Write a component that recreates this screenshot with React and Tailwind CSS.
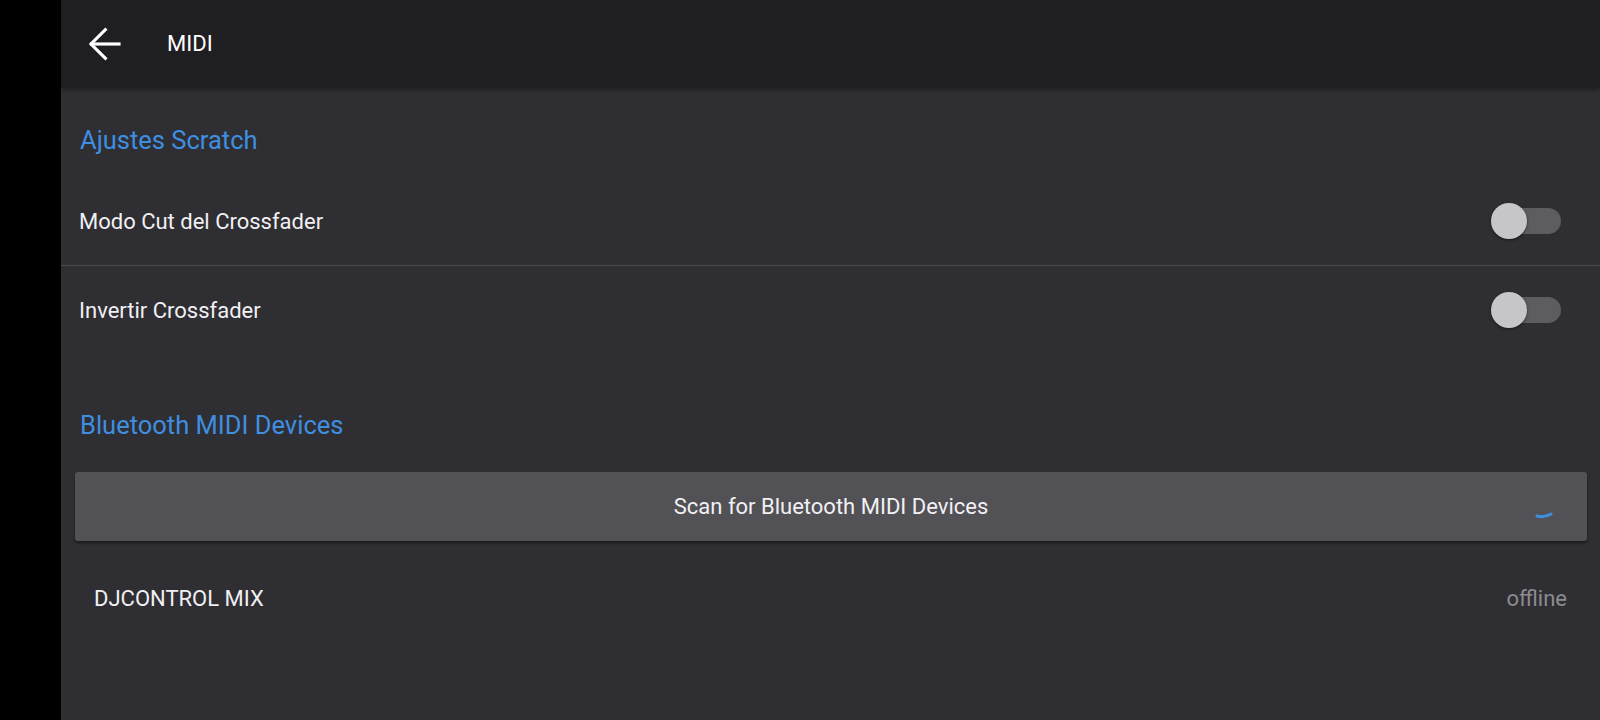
import React from "react";

function Toggle() {
  return (
    <div className="relative w-[70px] h-[36px] flex items-center">
      <div className="absolute left-[18px] right-0 h-[26px] rounded-full bg-[#5d5c60]" />
      <div className="absolute left-0 w-[36px] h-[36px] rounded-full bg-[#c6c5c9] shadow-[0_1px_3px_rgba(0,0,0,0.5)]" />
    </div>
  );
}

export default function App() {
  return (
    <div
      className="w-[1600px] h-[720px] flex bg-black overflow-hidden"
      style={{ fontFamily: "Roboto, 'Noto Sans', sans-serif" }}
    >
      <div className="w-[61px] shrink-0 bg-black" />
      <div className="flex-1 flex flex-col bg-[#2f2e32]">
        <div className="h-[88px] shrink-0 bg-[#1f1e22] flex items-center shadow-[0_2px_4px_rgba(0,0,0,0.35)] relative z-10">
          <div className="w-[88px] flex justify-center">
            <svg width="40" height="40" viewBox="0 0 24 24" fill="none" stroke="#ffffff" strokeWidth="1.9" strokeLinecap="square" strokeLinejoin="miter">
              <path d="M20.4 12H4" />
              <path d="M12.2 3.4L3.6 12l8.6 8.6" />
            </svg>
          </div>
          <span className="ml-[18px] text-white text-[22px] leading-none">MIDI</span>
        </div>

        <div className="pl-[19px] pt-[36px] text-[25.5px] leading-[32px] text-[#3f8fe1]">Ajustes Scratch</div>

        <div className="mt-[21px] h-[88px] flex items-center justify-between pl-[18px] pr-[39px]">
          <span className="text-[22px] text-[#f1f0f4]">Modo Cut del Crossfader</span>
          <Toggle />
        </div>
        <div className="h-px bg-[#4b4a4e]" />
        <div className="h-[88px] flex items-center justify-between pl-[18px] pr-[39px]">
          <span className="text-[22px] text-[#f1f0f4]">Invertir Crossfader</span>
          <Toggle />
        </div>

        <div className="pl-[19px] mt-[55px] text-[25.5px] leading-[32px] text-[#3f8fe1]">Bluetooth MIDI Devices</div>

        <div className="mt-[31px] ml-[14px] mr-[13px] h-[69px] rounded-[3px] bg-[#525155] shadow-[0_2px_3px_rgba(0,0,0,0.45)] relative flex items-center justify-center">
          <span className="text-[22px] text-[#f1f0f4]">Scan for Bluetooth MIDI Devices</span>
          <svg className="absolute right-[34px] top-[36px]" width="18" height="12" viewBox="0 0 18 12" fill="none">
            <path d="M2 8 Q9 10 16 6" stroke="#3f8fe1" strokeWidth="3" strokeLinecap="round" />
          </svg>
        </div>

        <div className="mt-[37px] flex items-center justify-between pl-[33px] pr-[33px] h-[40px]">
          <span className="text-[22px] text-[#f1f0f4]">DJCONTROL MIX</span>
          <span className="text-[22px] text-[#8c8b8f]">offline</span>
        </div>
      </div>
    </div>
  );
}
